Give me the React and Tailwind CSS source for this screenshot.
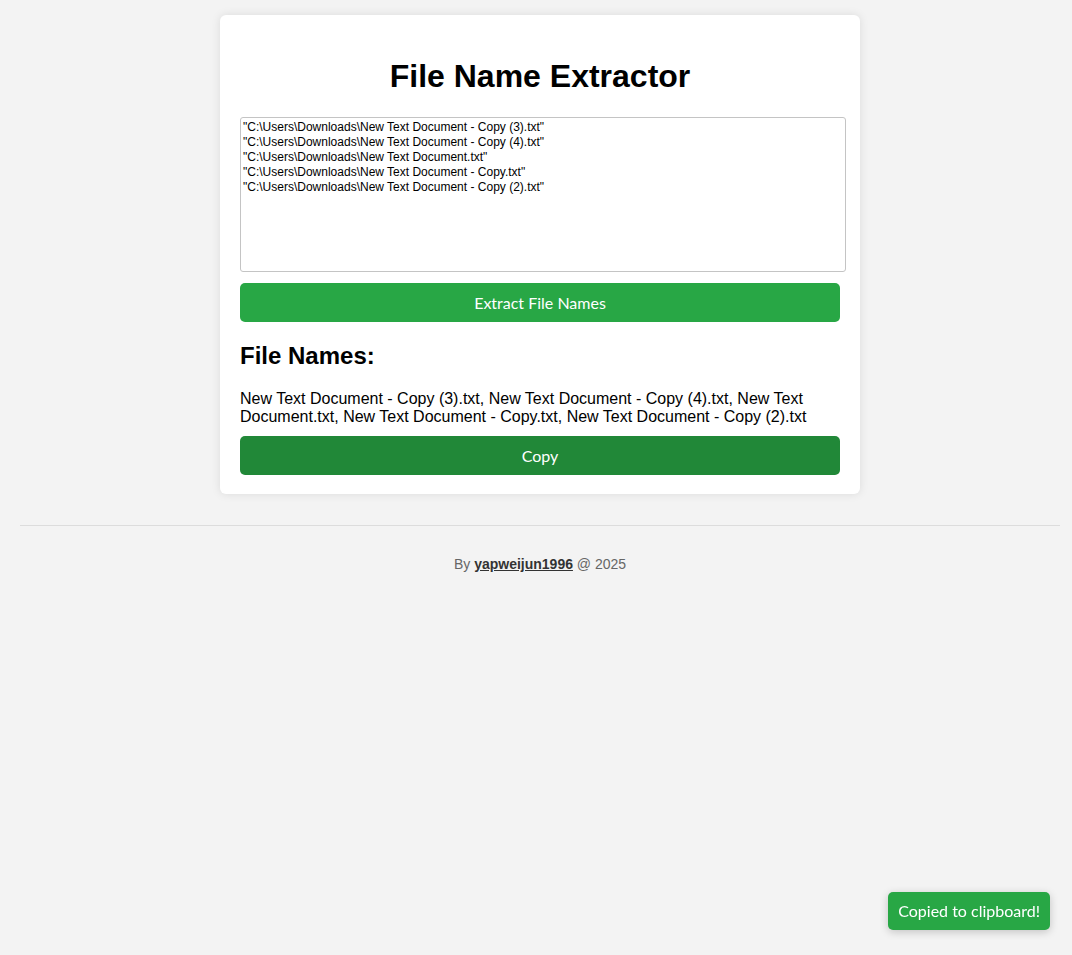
import { useState } from "react";

const SAMPLE = `"C:\\Users\\Downloads\\New Text Document - Copy (3).txt"
"C:\\Users\\Downloads\\New Text Document - Copy (4).txt"
"C:\\Users\\Downloads\\New Text Document.txt"
"C:\\Users\\Downloads\\New Text Document - Copy.txt"
"C:\\Users\\Downloads\\New Text Document - Copy (2).txt"`;

function extract(text) {
  return text
    .split("\n")
    .map(l => l.trim().replace(/^"|"$/g, ""))
    .filter(Boolean)
    .map(p => p.split(/[\\/]/).pop())
    .join(", ");
}

export default function App() {
  const [input, setInput] = useState(SAMPLE);
  const [names, setNames] = useState(extract(SAMPLE));
  const [toast, setToast] = useState(true);

  function handleCopy() {
    navigator.clipboard?.writeText(names).catch(() => {});
    setToast(true);
  }

  return (
    <div className="min-h-screen bg-[#f3f3f3] pl-5 pr-3 pt-[15px] text-black" style={{ fontFamily: "'Liberation Sans', Arial, sans-serif" }}>
      <div className="mx-auto w-[640px] rounded-md bg-white px-5 pt-5 pb-[19px] shadow-[0_0_10px_rgba(0,0,0,0.1)]">
        <h1 className="mt-[23px] mb-[22px] text-center text-[32px] font-bold leading-[37px]">File Name Extractor</h1>
        <textarea
          value={input}
          onChange={e => setInput(e.target.value)}
          className="block h-[155px] w-[606px] resize-none rounded-[3px] border border-[#c4c4c4] px-[2px] py-[2px] text-[12px] leading-[15px] outline-none"
          style={{ fontFamily: "'Liberation Sans', Arial, sans-serif" }}
        />
        <button
          onClick={() => setNames(extract(input))}
          className="mt-[11px] block h-[39px] w-full rounded-[5px] bg-[#28a745] text-[16px] text-white"
          style={{ fontFamily: "Lato, 'Open Sans', sans-serif" }}
        >
          Extract File Names
        </button>
        <h2 className="mt-[20px] mb-[20px] text-[24px] font-bold leading-[28px]">File Names:</h2>
        <p className="text-[16px] leading-[18px]">{names}</p>
        <button
          onClick={handleCopy}
          className="mt-[10px] block h-[39px] w-full rounded-[5px] bg-[#218838] text-[16px] text-white"
          style={{ fontFamily: "Lato, 'Open Sans', sans-serif" }}
        >
          Copy
        </button>
      </div>
      <hr className="mt-[31px] border-t border-[#dcdcdc]" />
      <p className="mt-[28px] text-center text-[14px] text-[#666]">
        By <a href="#" className="font-bold text-[#333] underline">yapweijun1996</a> @ 2025
      </p>
      {toast && (
        <div
          className="fixed right-[22px] bottom-[25px] flex h-[38px] items-center rounded-[5px] bg-[#28a745] px-[10px] text-[16px] text-white shadow-[0_2px_8px_rgba(0,0,0,0.2)]"
          style={{ fontFamily: "Lato, 'Open Sans', sans-serif" }}
        >
          Copied to clipboard!
        </div>
      )}
    </div>
  );
}
